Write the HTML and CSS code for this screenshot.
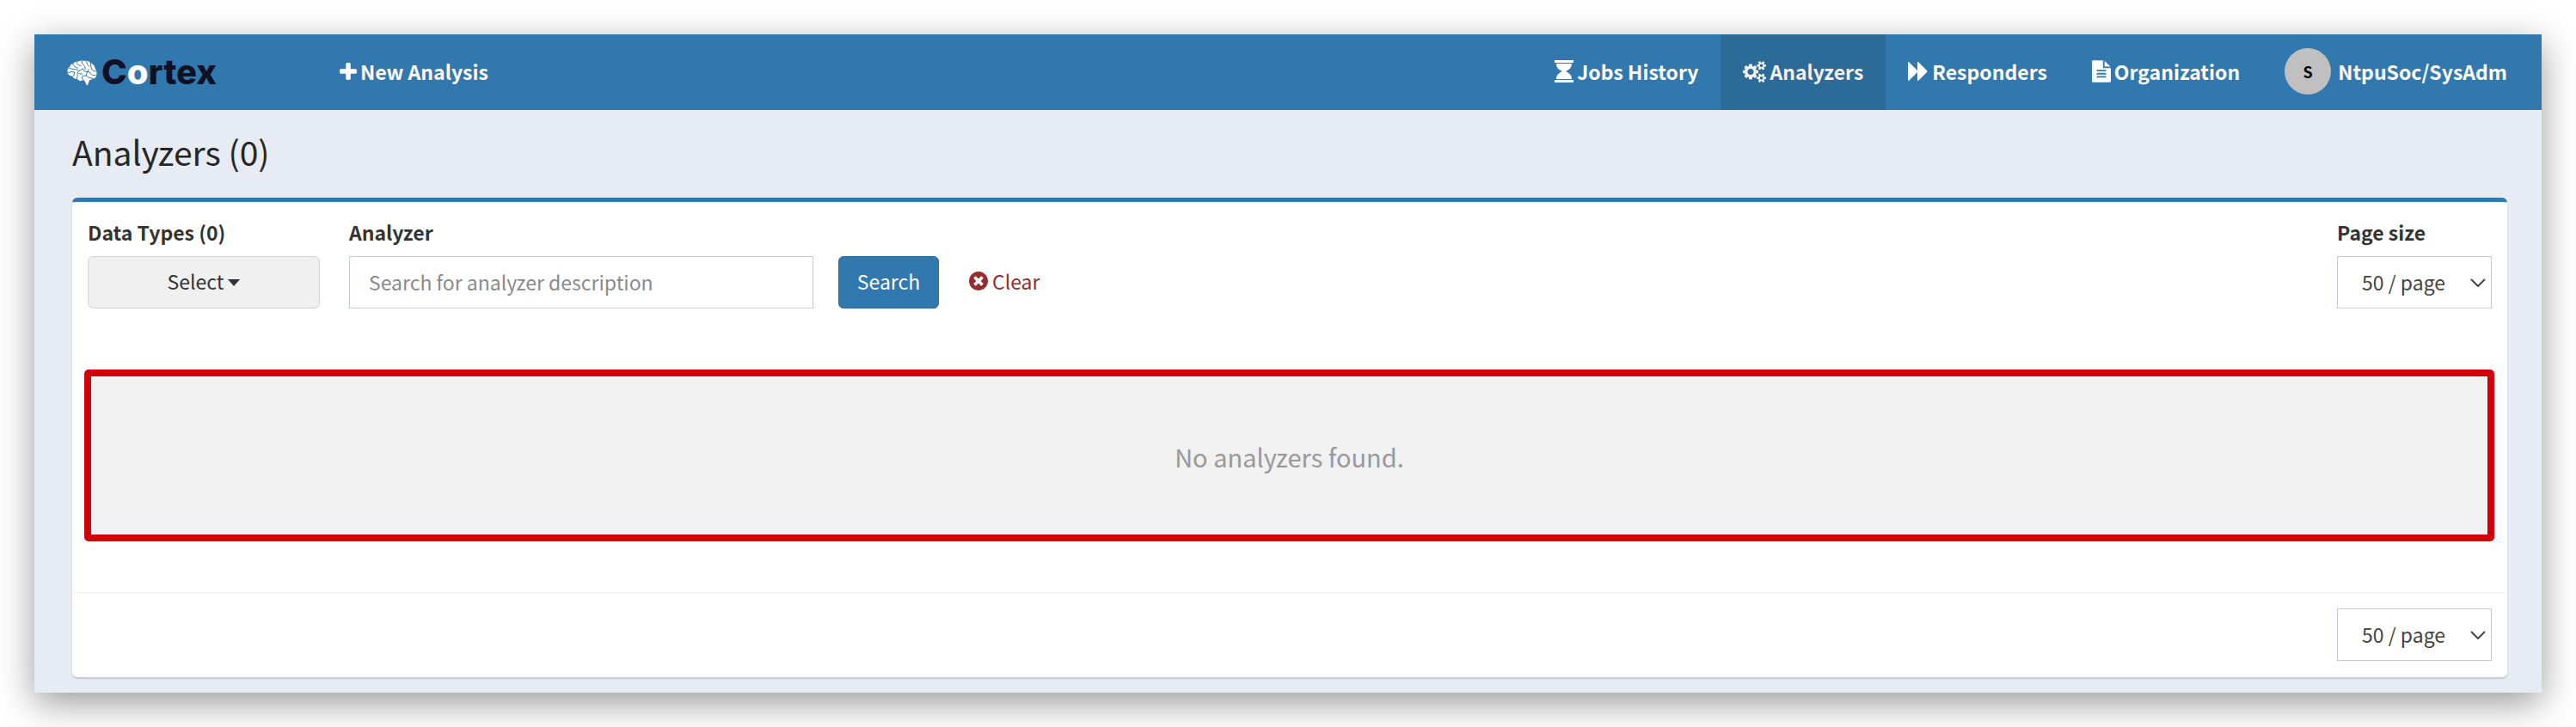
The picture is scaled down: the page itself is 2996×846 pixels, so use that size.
FILE: index.html
```html
<!DOCTYPE html>
<html lang="en">
<head>
<meta charset="utf-8">
<meta name="viewport" content="width=device-width, initial-scale=1">
<title>Cortex - Analyzers</title>
<link rel="stylesheet" href="styles.css">
</head>
<body>
<div class="window">
  <header class="navbar">
    <a class="brand" href="#" aria-label="Cortex">
      <svg class="brand-icon" viewBox="0 0 70 58" aria-hidden="true">
        <path fill="#fff" d="M14 8C18 3 25 3 28 3C32 0 38 1 41 2C47 0 52 3 55 7C61 9 65 14 65 19C70 25 70 33 67 39C65 42 62 43 59 43C57 45 54 46 52 47L48 58L44 57C44 51 41 48 37 46C34 49 27 49 24 44C18 44 14 42 12 37C5 37 0 31 1 25C1 20 4 17 6 16C7 12 10 9 14 8Z"/>
        <g fill="none" stroke="#3178af" stroke-width="2" stroke-linecap="round">
          <path d="M14 8Q14 16 25 18M22 5Q23 12 32 13M34 2Q33 9 41 14Q43 17 42 22M45 3Q46 12 52 15M55 7Q54 15 58 22Q60 26 67 26"/>
          <path d="M5 18Q12 22 17 21Q25 21 27 25Q33 24 36 20M3 29Q10 25 17 28Q18 31 15 37M27 25Q22 32 25 35Q22 38 23 44"/>
          <path d="M36 20Q39 28 48 27Q54 27 56 32Q57 36 66 35M48 27Q44 31 45 36Q37 35 34 40L37 46M28 31Q34 30 36 34M45 36Q48 42 59 42M50 21Q48 23 48 27"/>
        </g>
      </svg>
      <span class="brand-name">C<span class="brand-o">o</span>rtex</span>
    </a>
    <nav class="nav nav-main" aria-label="Actions">
      <a class="nav-link" href="#">
        <svg class="icon-plus" viewBox="192 128 1408 1408" aria-hidden="true"><path fill="currentColor" d="M1600 736v192q0 40-28 68t-68 28h-416v416q0 40-28 68t-68 28h-192q-40 0-68-28t-28-68v-416h-416q-40 0-68-28t-28-68v-192q0-40 28-68t68-28h416v-416q0-40 28-68t68-28h192q40 0 68 28t28 68v416h416q40 0 68 28t28 68z"/></svg>
        New Analysis
      </a>
    </nav>
    <nav class="nav" aria-label="Main">
      <a class="nav-link" href="#">
        <svg class="icon-page" viewBox="0 0 22 26" aria-hidden="true"><path fill="currentColor" d="M0 0H22V3H0ZM2 4H20C20 9 17 11 13 13C17 15 20 17 20 22H2C2 17 5 15 9 13C5 11 2 9 2 4ZM0 23H22V26H0Z"/></svg>
        Jobs History
      </a>
      <a class="nav-link nav-link-active" href="#" aria-current="page">
        <svg class="icon-cogs" viewBox="0 0 1920 1920" aria-hidden="true"><path fill="currentColor" d="M896 960q0-106-75-181t-181-75-181 75-75 181 75 181 181 75 181-75 75-181zm768 512q0-52-38-90t-90-38-90 38-38 90q0 53 37.5 90.5t90.5 37.5 90.5-37.5 37.5-90.5zm0-1024q0-52-38-90t-90-38-90 38-38 90q0 53 37.5 90.5t90.5 37.5 90.5-37.5 37.5-90.5zm-384 421v185q0 10-7 19.5t-16 10.5l-155 24q-11 35-32 76 34 48 90 115 7 11 7 20 0 12-7 19-23 30-82.5 89.5t-78.5 59.5q-11 0-21-7l-115-90q-37 19-77 31-11 108-23 155-7 24-30 24h-186q-11 0-20-7.5t-10-17.5l-23-153q-34-10-75-31l-118 89q-7 7-20 7-11 0-21-8-144-133-144-160 0-9 7-19 10-14 41-53t47-61q-23-44-35-82l-152-24q-10-1-17-9.5t-7-19.5v-185q0-10 7-19.5t16-10.5l155-24q11-35 32-76-34-48-90-115-7-11-7-20 0-12 7-20 22-30 82-89t79-59q11 0 21 7l115 90q34-18 77-32 11-108 23-154 7-24 30-24h186q11 0 20 7.5t10 17.5l23 153q34 10 75 31l118-89q8-7 20-7 11 0 21 8 144 133 144 160 0 8-7 19-12 16-42 54t-45 60q23 48 34 82l152 23q10 2 17 10.5t7 19.5zm640 533v140q0 16-149 31-12 27-30 52 51 113 51 138 0 4-4 7-122 71-124 71-8 0-46-47t-52-68q-20 2-30 2t-30-2q-14 21-52 68t-46 47q-2 0-124-71-4-3-4-7 0-25 51-138-18-25-30-52-149-15-149-31v-140q0-16 149-31 13-29 30-52-51-113-51-138 0-4 4-7 4-2 35-20t59-34 30-16q8 0 46 46.5t52 67.5q20-2 30-2t30 2q51-71 92-112l6-2q4 0 124 70 4 3 4 7 0 25-51 138 17 23 30 52 149 15 149 31zm0-1024v140q0 16-149 31-12 27-30 52 51 113 51 138 0 4-4 7-122 71-124 71-8 0-46-47t-52-68q-20 2-30 2t-30-2q-14 21-52 68t-46 47q-2 0-124-71-4-3-4-7 0-25 51-138-18-25-30-52-149-15-149-31v-140q0-16 149-31 13-29 30-52-51-113-51-138 0-4 4-7 4-2 35-20t59-34 30-16q8 0 46 46.5t52 67.5q20-2 30-2t30 2q51-71 92-112l6-2q4 0 124 70 4 3 4 7 0 25-51 138 17 23 30 52 149 15 149 31z"/></svg>
        Analyzers
      </a>
      <a class="nav-link" href="#">
        <svg class="icon-forward" viewBox="0 0 24 22" aria-hidden="true"><path fill="currentColor" d="M0 1Q0 0 1 0L11 10V1Q11 0 12 0L22 10Q23 11 22 12L12 22Q11 22 11 21V12L1 22Q0 22 0 21Z"/></svg>
        Responders
      </a>
      <a class="nav-link" href="#">
        <svg class="icon-page" viewBox="128 0 1536 1792" aria-hidden="true"><path fill="currentColor" d="M1596 476q14 14 28 36h-472v-472q22 14 36 28zm-476 164h544v1056q0 40-28 68t-68 28h-1344q-40 0-68-28t-28-68v-1600q0-40 28-68t68-28h800v544q0 40 28 68t68 28zm160 736v-64q0-14-9-23t-23-9h-704q-14 0-23 9t-9 23v64q0 14 9 23t23 9h704q14 0 23-9t9-23zm0-256v-64q0-14-9-23t-23-9h-704q-14 0-23 9t-9 23v64q0 14 9 23t23 9h704q14 0 23-9t9-23zm0-256v-64q0-14-9-23t-23-9h-704q-14 0-23 9t-9 23v64q0 14 9 23t23 9h704q14 0 23-9t9-23z"/></svg>
        Organization
      </a>
      <a class="nav-link nav-user" href="#">
        <span class="avatar">S</span>
        NtpuSoc/SysAdm
      </a>
    </nav>
  </header>

  <main class="content">
    <h1 class="title">Analyzers (0)</h1>
    <section class="card">
      <form class="filters">
        <div class="field field-types">
          <span class="label" id="types-label">Data Types (0)</span>
          <button class="dropdown" type="button" aria-describedby="types-label">Select
            <svg class="caret" viewBox="0 0 14 8" aria-hidden="true"><path fill="currentColor" d="M0 0H14L7 8Z"/></svg>
          </button>
        </div>
        <div class="field field-search">
          <label class="label" for="analyzer">Analyzer</label>
          <input class="text-input" id="analyzer" type="text" placeholder="Search for analyzer description">
        </div>
        <button class="search" type="submit">Search</button>
        <a class="clear" href="#">
          <svg class="icon-clear" viewBox="128 128 1536 1536" aria-hidden="true"><path fill="currentColor" d="M1277 1122q0-26-19-45l-181-181 181-181q19-19 19-45 0-27-19-46l-90-90q-19-19-46-19-26 0-45 19l-181 181-181-181q-19-19-45-19-27 0-46 19l-90 90q-19 19-19 46 0 26 19 45l181 181-181 181q-19 19-19 45 0 27 19 46l90 90q19 19 46 19 26 0 45-19l181-181 181 181q19 19 45 19 27 0 46-19l90-90q19-19 19-46zm387-226q0 209-103 385.5t-279.5 279.5-385.5 103-385.5-103-279.5-279.5-103-385.5 103-385.5 279.5-279.5 385.5-103 385.5 103 279.5 279.5 103 385.5z"/></svg>
          Clear
        </a>
        <div class="field field-size">
          <label class="label" for="size-top">Page size</label>
          <div class="select-wrap">
            <select class="select" id="size-top"><option>50 / page</option><option>100 / page</option></select>
            <svg class="chevron" viewBox="0 0 18 10" aria-hidden="true"><path fill="none" stroke="#444" stroke-width="2" d="M1 1L9 9L17 1"/></svg>
          </div>
        </div>
      </form>
      <div class="empty">No analyzers found.</div>
      <footer class="card-footer">
        <div class="select-wrap">
          <select class="select" aria-label="Page size"><option>50 / page</option><option>100 / page</option></select>
          <svg class="chevron" viewBox="0 0 18 10" aria-hidden="true"><path fill="none" stroke="#444" stroke-width="2" d="M1 1L9 9L17 1"/></svg>
        </div>
      </footer>
    </section>
  </main>
</div>
</body>
</html>
```
FILE: styles.css
```css
* {
  box-sizing: border-box;
}

body {
  margin: 0;
  padding: 40px;
  background: #fff;
  color: #333;
  font-family: "Noto Sans CJK SC", "Noto Sans", sans-serif;
  font-size: 23px;
  line-height: 32px;
}

button,
input,
select {
  margin: 0;
  font: inherit;
  color: inherit;
}

a {
  color: inherit;
  text-decoration: none;
}

svg {
  flex: none;
}

.window {
  background: #e7ebf3;
  box-shadow: 0 12px 40px rgba(0, 0, 0, 0.4);
}

/* Top bar */
.navbar {
  display: flex;
  min-height: 88px;
  padding: 0 14px 0 38px;
  background: #3178af;
  color: #fff;
  font-weight: 700;
}

.brand {
  display: flex;
  align-items: center;
  gap: 5px;
  width: 291px;
}

.brand-icon {
  width: 35px;
  height: 29px;
}

.brand-name {
  color: #111126;
  font-family: Inter, sans-serif;
  font-size: 40px;
  font-weight: 800;
  line-height: 48px;
}

.brand-o {
  color: #fff;
}

.nav {
  display: flex;
}

.nav-main {
  flex: 1;
}

.nav-link {
  display: flex;
  align-items: center;
  gap: 4px;
  padding: 0 26px 2px;
  white-space: nowrap;
}

.nav-link-active {
  background: #2c6a98;
  color: #f1f1f1;
}

.icon-plus {
  width: 20px;
  height: 20px;
}

.icon-page {
  width: 22px;
  height: 26px;
}

.icon-cogs {
  width: 27px;
  height: 27px;
}

.icon-forward {
  width: 24px;
  height: 22px;
}

.nav-user {
  gap: 8px;
}

.avatar {
  display: flex;
  align-items: center;
  justify-content: center;
  width: 54px;
  height: 54px;
  border-radius: 50%;
  background: #c0c0c0;
  color: #000;
  font-size: 18px;
}

/* Page */
.content {
  padding: 22px 40px 18px 44px;
}

.title {
  margin: 0 0 28px;
  color: #262626;
  font-size: 39px;
  font-weight: 400;
  line-height: 52px;
}

.card {
  border-top: 5px solid #3178af;
  border-radius: 6px;
  background: #fff;
  box-shadow: 0 2px 2px rgba(0, 0, 0, 0.15);
}

.filters {
  display: flex;
  align-items: flex-end;
  padding: 19px 18px 0;
}

.field {
  display: flex;
  flex-direction: column;
  gap: 12px;
}

.field-types {
  width: 270px;
  margin-right: 34px;
}

.field-search {
  width: 540px;
  margin-right: 29px;
}

.field-size {
  margin-left: auto;
}

.label {
  font-weight: 700;
}

.dropdown,
.search {
  display: flex;
  align-items: center;
  justify-content: center;
  gap: 5px;
  height: 61px;
  padding: 0 6px 3px;
  border: 1px solid #d2d2d2;
  border-radius: 6px;
  background: #f0f0f0;
}

.caret {
  width: 14px;
  height: 8px;
  margin-top: 4px;
}

.text-input {
  width: 100%;
  height: 61px;
  padding: 0 22px 2px;
  border: 1px solid #c6c9d8;
  border-radius: 0;
  background: #fff;
}

.text-input::placeholder {
  color: #8a8a8a;
  opacity: 1;
}

.search {
  width: 117px;
  margin-right: 35px;
  border-color: #2c6a98;
  background: #3178af;
  color: #fff;
}

.clear {
  display: flex;
  align-items: center;
  gap: 5px;
  height: 61px;
  padding-bottom: 4px;
  color: #952d30;
}

.icon-clear {
  width: 22px;
  height: 22px;
}

.select-wrap {
  display: grid;
  align-items: center;
  width: 180px;
}

.select,
.chevron {
  grid-area: 1 / 1;
}

.select {
  width: 100%;
  height: 61px;
  padding: 0 28px 2px;
  border: 1px solid #c6c9d8;
  border-radius: 0;
  background: #fff;
  color: #444;
  appearance: none;
}

.chevron {
  justify-self: end;
  width: 18px;
  height: 10px;
  margin-right: 7px;
  pointer-events: none;
}

.empty {
  display: flex;
  align-items: center;
  justify-content: center;
  min-height: 200px;
  margin: 71px 15px 59px 14px;
  padding-top: 2px;
  border: 8px solid #d2000d;
  border-radius: 5px;
  background: #f1f1f1;
  color: #999;
  font-size: 29px;
}

.card-footer {
  display: flex;
  justify-content: flex-end;
  padding: 18px 18px 19px;
  border-top: 1px solid #eee;
}
```
